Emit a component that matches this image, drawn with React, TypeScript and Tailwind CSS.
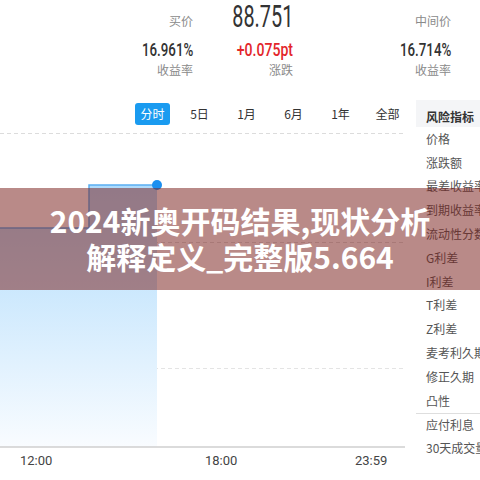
const cjk = { fontFamily: '"Noto Sans CJK SC", "Noto Sans", sans-serif' }
const num = { fontFamily: 'Roboto, "Noto Sans CJK SC", sans-serif' }

const tabs = ['分时', '5日', '1月', '6月', '1年', '全部']
const metrics = [
  '价格',
  '涨跌额',
  '最差收益率',
  '到期收益率',
  '流动性分数',
  'G利差',
  'I利差',
  'T利差',
  'Z利差',
  '麦考利久期',
  '修正久期',
  '凸性',
  '应付利息',
  '30天成交量',
]

function Stat({ label, value, sub, width, red }: { label: string; value: string; sub: string; width: string; red?: boolean }) {
  return (
    <div className={`flex flex-col items-end ${width}`}>
      <div className="mt-[12px] h-[18px] text-[12px] leading-[18px] text-[#8a8a8a]" style={cjk}>
        {label}
      </div>
      <div
        className={`mt-[10px] h-[20px] origin-right scale-x-[0.7] text-[19px] font-medium leading-[20px] ${red ? 'text-[#e3262b]' : 'text-[#333]'}`}
        style={num}
      >
        {value}
      </div>
      <div className="mt-[1px] h-[18px] text-[12px] leading-[18px] text-[#8a8a8a]" style={cjk}>
        {sub}
      </div>
    </div>
  )
}

function Chart() {
  return (
    <svg width="405" height="323" viewBox="0 0 405 323" className="block">
      <defs>
        <linearGradient id="fill" x1="0" y1="0" x2="0" y2="1">
          <stop offset="0%" stopColor="#aedbfc" />
          <stop offset="100%" stopColor="#f9fcff" />
        </linearGradient>
      </defs>
      <line x1="0" y1="8.5" x2="405" y2="8.5" stroke="#dcdcdc" strokeDasharray="4 3" />
      <line x1="0" y1="117.5" x2="405" y2="117.5" stroke="#dcdcdc" strokeDasharray="4 3" />
      <line x1="0" y1="243.5" x2="405" y2="243.5" stroke="#e4e4e4" strokeDasharray="4 3" />
      <path d="M0 103 H89 V60 H157 V322 H0 Z" fill="url(#fill)" />
      <path d="M0 103 H89 V60 H157" fill="none" stroke="#5aaef2" strokeWidth="1.5" />
      <circle cx="157" cy="60" r="5" fill="#1b8ff0" />
      <line x1="0" y1="322" x2="405" y2="322" stroke="#cfcfcf" strokeWidth="1.5" />
    </svg>
  )
}

export default function App() {
  return (
    <div className="relative h-[480px] w-[480px] overflow-hidden bg-white">
      <div className="flex h-[95px]">
        <Stat width="w-[193px]" label="买价" value="16.961%" sub="收益率" />
        <div className="flex w-[100px] flex-col items-end">
          <div className="mt-[1px] h-[32px] origin-right scale-x-[0.64] text-[31px] leading-[32px] text-[#333]" style={num}>
            88.751
          </div>
          <div className="mt-[7px] h-[20px] origin-right scale-x-[0.74] text-[19px] font-medium leading-[20px] text-[#e3262b]" style={num}>
            +0.075pt
          </div>
          <div className="mt-[1px] h-[18px] text-[12px] leading-[18px] text-[#8a8a8a]" style={cjk}>
            涨跌
          </div>
        </div>
        <Stat width="w-[158px]" label="中间价" value="16.714%" sub="收益率" />
      </div>

      <div className="flex">
        <div className="w-[416px]">
          <div className="mt-[8px] flex h-[22px] pl-[129px]">
            {tabs.map((t, i) => (
              <div key={t} className="flex w-[47px] items-center justify-center">
                <span
                  className={
                    i === 0
                      ? 'flex h-[22px] w-[35px] items-center justify-center rounded-[3px] bg-[#1a9bf0] text-[12px] text-white'
                      : 'text-[12px] text-[#333]'
                  }
                  style={cjk}
                >
                  {t}
                </span>
              </div>
            ))}
          </div>
          <Chart />
          <div className="relative h-[24px] text-[13px] text-[#444]" style={num}>
            <span className="absolute left-[20px] top-[3px]">12:00</span>
            <span className="absolute left-[205px] top-[3px]">18:00</span>
            <span className="absolute left-[355px] top-[3px]">23:59</span>
          </div>
        </div>

        <div className="mt-[5px] w-[64px] overflow-hidden whitespace-nowrap" style={cjk}>
          <div className="flex h-[27px] items-center bg-[#f4f5f7] pl-[10px] pt-[6px] text-[12px] font-bold text-[#333]">
            风险指标
          </div>
          {metrics.map((m, i) => (
            <div
              key={m}
              className={`flex h-[23.8px] items-center pl-[10px] text-[12px] text-[#555] ${i === 12 ? 'border-t border-[#dedede]' : ''}`}
            >
              {m}
            </div>
          ))}
        </div>
      </div>

      <div className="absolute left-0 top-[188px] flex h-[102px] w-full flex-col items-center justify-center bg-[rgba(121,31,27,0.52)] pb-[2px]">
        <div className="text-[30px] font-bold leading-[36px] text-white" style={cjk}>
          2024新奥开码结果,现状分析
        </div>
        <div className="text-[30px] font-bold leading-[36px] text-white" style={cjk}>
          解释定义_完整版5.664
        </div>
      </div>
    </div>
  )
}
